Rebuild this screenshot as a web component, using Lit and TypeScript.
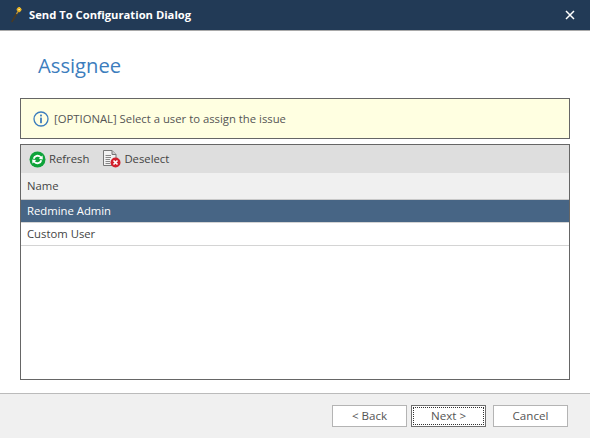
import { LitElement, html, css } from "lit";
import { customElement } from "lit/decorators.js";

@customElement("app-root")
export class AppRoot extends LitElement {
  static styles = css`
    :host { display: block; width: 590px; height: 438px; font-family: "Open Sans", "Noto Sans", sans-serif; font-size: 11.3px; color: #444; background: #fff; overflow: hidden; }
    .win { display: flex; flex-direction: column; height: 438px; }
    .titlebar { flex: none; height: 30px; box-sizing: content-box; background: #223a56; border-bottom: 1px solid #a9a9a9; display: flex; align-items: center; padding: 0 15px 0 10px; color: #fff; }
    .wand { width: 16px; height: 18px; margin-right: 3px; flex: none; }
    .t { font-weight: 700; font-size: 11.22px; flex: 1; line-height: 14px; margin-top: -1px; }
    .close { width: 10px; height: 10px; display: block; }
    .main { flex: 1; display: flex; flex-direction: column; padding: 0 20px; min-height: 0; }
    h1 { margin: 20px 0 19px 18px; font-weight: 400; font-size: 20.2px; line-height: 28px; color: #3c7dbd; height: 28px; }
    .info { height: 39px; background: #ffffe1; border: 1px solid #666; display: flex; align-items: center; padding-left: 12px; gap: 5px; flex: none; color: #555; }
    .tool span, .head span, .row span, .btn span { position: relative; top: -1px; }
    .list { margin-top: 5px; height: 234px; border: 1px solid #666; flex: none; display: flex; flex-direction: column; }
    .tools { height: 28px; background: #dedede; display: flex; align-items: center; padding-left: 8px; flex: none; }
    .tool { display: flex; align-items: center; gap: 3px; }
    .tool + .tool { margin-left: 14px; }
    .head { height: 26px; background: #f0f0f0; border-bottom: 1px solid #c9c9c9; display: flex; align-items: center; padding-left: 6px; flex: none; }
    .row { height: 22px; display: flex; align-items: center; padding-left: 6px; border-bottom: 1px solid #d4d4d4; flex: none; }
    .row.sel { background: #476585; color: #fff; }
    .footer { flex: none; height: 45px; box-sizing: border-box; background: #f0f0f0; border-top: 1px solid #bbb; display: flex; justify-content: flex-end; align-items: flex-start; padding: 11px 22px 0 0; }
    .btn { width: 75px; height: 22px; box-sizing: border-box; background: #fff; border: 1px solid #b4b4b4; display: flex; align-items: center; justify-content: center; color: #555; position: relative; font-size: 11.6px; }
    .btn.back { margin-right: 4px; }
    .btn.next { margin-right: 7px; border-color: #6e6e6e; }
    .btn.next::after { content: ""; position: absolute; inset: 1px; border: 1px dotted #333; }
    svg { display: block; flex: none; }
  `;

  render() {
    return html`<div class="win">
      <div class="titlebar">
        <svg class="wand" viewBox="0 0 16 18">
          <path d="M2 15.5 L7.5 6.5" stroke="#4a3a22" stroke-width="1.5" stroke-linecap="round"/>
          <path d="M6.5 8 L8 5.5" stroke="#b8923f" stroke-width="1.4"/>
          <rect x="7.2" y="1.8" width="3.8" height="3.6" fill="#f4c430"/>
          <rect x="8.2" y="1" width="1.8" height="5.2" fill="#e8b020"/>
          <rect x="6.6" y="2.8" width="5" height="1.6" fill="#e8b020"/>
          <rect x="8.4" y="3" width="1.4" height="1.2" fill="#fff6c8"/>
        </svg>
        <div class="t">Send To Configuration Dialog</div>
        <svg class="close" viewBox="0 0 10 10"><path d="M1 1 L9 9 M9 1 L1 9" stroke="#fff" stroke-width="1.5"/></svg>
      </div>
      <div class="main">
        <h1>Assignee</h1>
        <div class="info">
          <svg width="16" height="16" viewBox="0 0 16 16">
            <circle cx="8" cy="8" r="7" fill="none" stroke="#3c7dbd" stroke-width="1.3"/>
            <rect x="7.1" y="3.6" width="1.8" height="1.8" fill="#3c7dbd"/>
            <rect x="7.1" y="6.6" width="1.8" height="5.6" fill="#3c7dbd"/>
          </svg>
          <span>[OPTIONAL] Select a user to assign the issue</span>
        </div>
        <div class="list">
          <div class="tools">
            <div class="tool">
              <svg width="17" height="17" viewBox="0 0 17 17">
                <circle cx="8.5" cy="8.5" r="8" fill="#0fa33a"/>
                <path d="M3.8 7.6 A4.8 4.8 0 0 1 12.2 5.6 L13.6 4.4 L13.8 8.4 L9.8 8 L11.1 6.8 A3.2 3.2 0 0 0 5.6 7.9 Z" fill="#fff"/>
                <path d="M13.2 9.4 A4.8 4.8 0 0 1 4.8 11.4 L3.4 12.6 L3.2 8.6 L7.2 9 L5.9 10.2 A3.2 3.2 0 0 0 11.4 9.1 Z" fill="#fff"/>
              </svg>
              <span>Refresh</span>
            </div>
            <div class="tool">
              <svg width="18" height="18" viewBox="0 0 18 18">
                <path d="M0.5 0.5 H9 L13 4.5 V15.5 H0.5 Z" fill="#f2f2f2" stroke="#777" stroke-width="1"/>
                <path d="M9 0.5 V4.5 H13" fill="#ccc" stroke="#777" stroke-width="1"/>
                <path d="M2.5 5.5 H8 M2.5 7.5 H8 M2.5 9.5 H7 M2.5 11.5 H7 M2.5 13.5 H7" stroke="#888" stroke-width="1"/>
                <circle cx="12.5" cy="12.5" r="5" fill="#d2202c"/>
                <path d="M10.5 10.5 L14.5 14.5 M14.5 10.5 L10.5 14.5" stroke="#fff" stroke-width="1.7"/>
              </svg>
              <span>Deselect</span>
            </div>
          </div>
          <div class="head"><span>Name</span></div>
          <div class="row sel"><span>Redmine Admin</span></div>
          <div class="row"><span>Custom User</span></div>
        </div>
      </div>
      <div class="footer">
        <div class="btn back"><span>&lt; Back</span></div>
        <div class="btn next"><span>Next &gt;</span></div>
        <div class="btn"><span>Cancel</span></div>
      </div>
    </div>`;
  }
}
